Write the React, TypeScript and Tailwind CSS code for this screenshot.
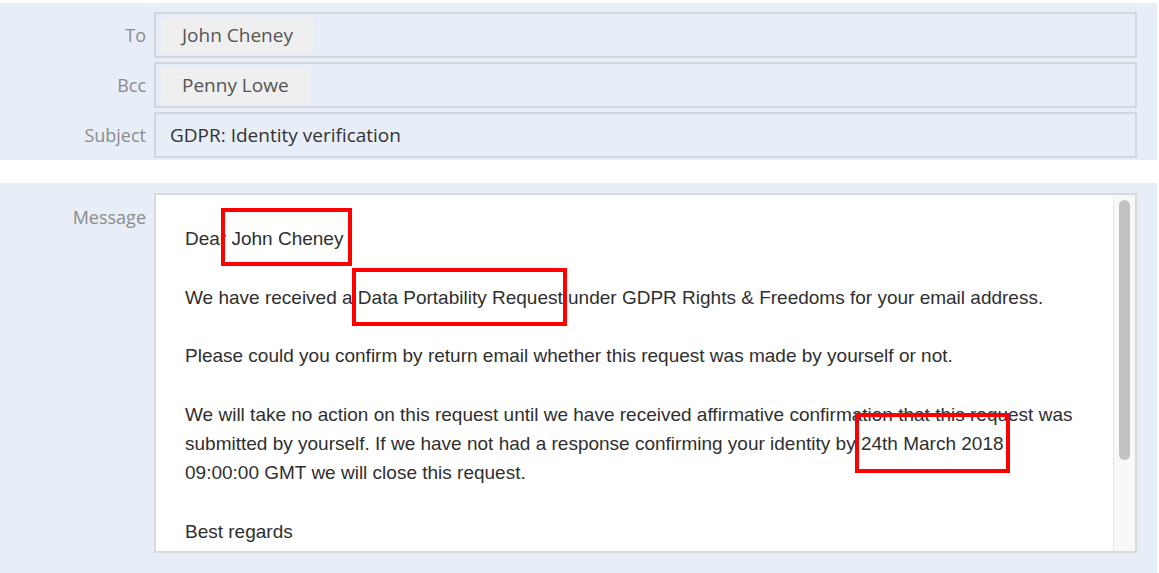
import type { ReactNode } from 'react';

function Field({ label, children }: { label: string; children: ReactNode }) {
  return (
    <div className="flex items-center">
      <div className="w-[146px] text-right text-[18px] text-[#8c8c8c]">{label}</div>
      <div className="ml-[8px] w-[983px] h-[46px] border-2 border-[#d3d7dc] bg-[#e7eef7] flex items-center">
        {children}
      </div>
    </div>
  );
}

function Chip({ name }: { name: string }) {
  return (
    <span className="ml-[5px] h-[35px] px-[21px] bg-[#efefef] text-[#555] text-[19px] flex items-center">
      {name}
    </span>
  );
}

// red highlight frame drawn over a phrase
function Marked({ children, box }: { children: ReactNode; box: string }) {
  return (
    <span className="relative">
      {children}
      <span className={`absolute border-[4px] border-[#ff0000] pointer-events-none ${box}`} />
    </span>
  );
}

export default function App() {
  return (
    <div className="w-[1159px] h-[573px] bg-white pt-[3px] font-['Open_Sans',sans-serif] overflow-hidden">
      {/* header fields */}
      <div className="mr-[2px] h-[157px] bg-[#e7eef7] pt-[9px] flex flex-col gap-[4px]">
        <Field label="To">
          <Chip name="John Cheney" />
        </Field>
        <Field label="Bcc">
          <Chip name="Penny Lowe" />
        </Field>
        <Field label="Subject">
          <span className="pl-[14px] text-[19px] text-[#333]">GDPR: Identity verification</span>
        </Field>
      </div>

      {/* message */}
      <div className="mt-[23px] mr-[2px] h-[390px] bg-[#e7eef7] pt-[10px] flex items-start">
        <div className="w-[146px] mt-[12px] leading-[24px] text-right text-[18px] text-[#8c8c8c]">Message</div>
        <div className="ml-[8px] w-[983px] h-[360px] border-2 border-[#d9d9d9] bg-white flex">
          <div className="flex-1 pl-[29px] pt-[29px] pr-[34px] font-['Liberation_Sans',Arial,sans-serif] text-[19px] leading-[29.3px] text-[#2f2f2f] overflow-hidden">
            <p className="mb-[29.3px]">
              Dear <Marked box="-left-[10px] -right-[9px] -top-[20px] -bottom-[17px]">John Cheney</Marked>
            </p>
            <p className="mb-[29.3px]">
              We have received a <Marked box="-left-[6px] -right-[4px] -top-[19px] -bottom-[18px]">Data Portability Request</Marked> under GDPR Rights &amp; Freedoms for your email address.
            </p>
            <p className="mb-[29.3px]">
              Please could you confirm by return email whether this request was made by yourself or not.
            </p>
            <p className="mb-[29.3px]">
              We will take no action on this request until we have received affirmative confirmation that this request was submitted by yourself. If we have not had a response confirming your identity by{' '}
              <Marked box="-left-[6px] -right-[6px] -top-[20px] -bottom-[19px]">24th March 2018</Marked>{' '}
              09:00:00 GMT we will close this request.
            </p>
            <p>Best regards</p>
          </div>
          <div className="w-[22px] h-full bg-[#f8f8f8] border-l border-[#e6e6e6] flex justify-center pt-[5px]">
            <div className="w-[11px] h-[260px] rounded-full bg-[#c2c2c2]" />
          </div>
        </div>
      </div>
    </div>
  );
}
